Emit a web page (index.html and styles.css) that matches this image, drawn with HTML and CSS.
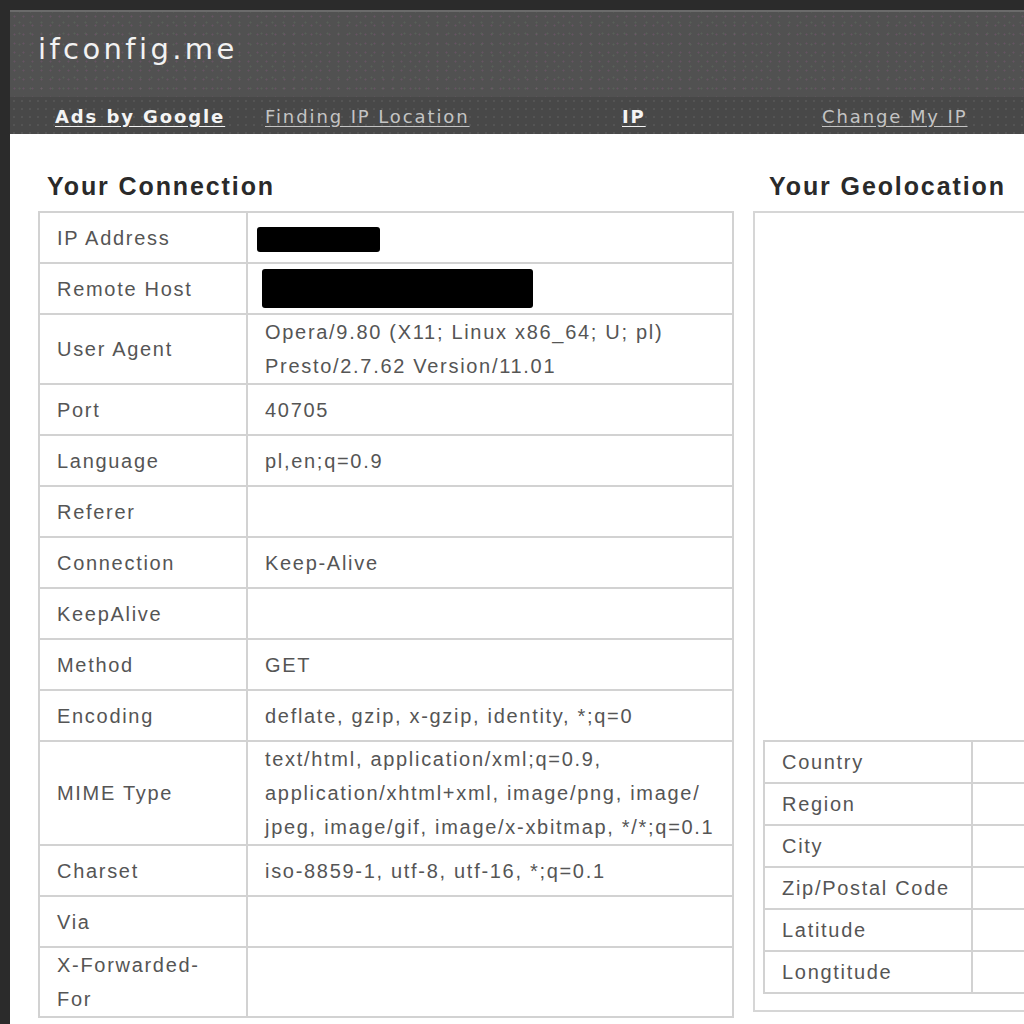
FILE: index.html
```html
<!DOCTYPE html>
<html lang="en">
<head>
  <meta charset="UTF-8" />
  <title>ifconfig.me</title>
  <link rel="stylesheet" href="styles.css">
</head>
<body>
  <div class="page">
    <div class="header">
      <div class="logo">ifconfig.me</div>
    </div>
    <div class="nav">
      <a class="nav-link strong" href="#">Ads by Google</a>
      <a class="nav-link" href="#">Finding IP Location</a>
      <a class="nav-link strong" href="#">IP</a>
      <a class="nav-link" href="#">Change My IP</a>
    </div>

    <div class="content">
      <div class="col">
        <h2 class="title">Your Connection</h2>
        <table class="info">
          <tr><td class="key">IP Address</td><td class="val"><span class="mask mask-ip"></span></td></tr>
          <tr><td class="key">Remote Host</td><td class="val"><span class="mask mask-host"></span></td></tr>
          <tr><td class="key">User Agent</td><td class="val">Opera/9.80 (X11; Linux x86_64; U; pl)<br>Presto/2.7.62 Version/11.01</td></tr>
          <tr><td class="key">Port</td><td class="val">40705</td></tr>
          <tr><td class="key">Language</td><td class="val">pl,en;q=0.9</td></tr>
          <tr><td class="key">Referer</td><td class="val"></td></tr>
          <tr><td class="key">Connection</td><td class="val">Keep-Alive</td></tr>
          <tr><td class="key">KeepAlive</td><td class="val"></td></tr>
          <tr><td class="key">Method</td><td class="val">GET</td></tr>
          <tr><td class="key">Encoding</td><td class="val">deflate, gzip, x-gzip, identity, *;q=0</td></tr>
          <tr><td class="key">MIME Type</td><td class="val">text/html, application/xml;q=0.9,<br>application/xhtml+xml, image/png, image/<br>jpeg, image/gif, image/x-xbitmap, */*;q=0.1</td></tr>
          <tr><td class="key">Charset</td><td class="val">iso-8859-1, utf-8, utf-16, *;q=0.1</td></tr>
          <tr><td class="key">Via</td><td class="val"></td></tr>
          <tr><td class="key">X-Forwarded-For</td><td class="val"></td></tr>
        </table>
      </div>

      <div class="col">
        <h2 class="title title-geo">Your Geolocation</h2>
        <div class="geo-box">
          <div class="map"></div>
          <table class="info geo">
            <tr><td class="key">Country</td><td class="val"></td></tr>
            <tr><td class="key">Region</td><td class="val"></td></tr>
            <tr><td class="key">City</td><td class="val"></td></tr>
            <tr><td class="key">Zip/Postal Code</td><td class="val"></td></tr>
            <tr><td class="key">Latitude</td><td class="val"></td></tr>
            <tr><td class="key">Longtitude</td><td class="val"></td></tr>
          </table>
        </div>
      </div>
    </div>
  </div>
</body>
</html>
```

FILE: styles.css
```css
html, body {
  margin: 0;
  padding: 0;
  background: #2b2b2b;
  overflow: hidden;
  height: 100vh;
  font-family: "Liberation Sans", Arial, sans-serif;
}

.page {
  margin: 10px 0 0 10px;
  width: 1460px;
  background: #fff;
  min-height: 1100px;
}

/* top bar with the grainy dark texture */
.header {
  height: 85px;
  border-top: 2px solid #6b6b6b;
  background-color: #515151;
  background-image:
    radial-gradient(circle, rgba(150,90,140,0.3) 0.8px, transparent 1.2px),
    radial-gradient(circle, rgba(110,140,110,0.25) 0.8px, transparent 1.2px);
  background-size: 9px 9px, 11px 11px;
  background-position: 0 0, 4px 5px;
  display: flex;
  align-items: center;
  padding-left: 28px;
}

.logo {
  font-family: "DejaVu Sans", Verdana, sans-serif;
  font-size: 29px;
  letter-spacing: 3.4px;
  color: #f2f2f2;
  margin-top: -12px;
}

.nav {
  height: 37px;
  background-color: #484848;
  background-image: radial-gradient(circle, rgba(120,120,120,0.25) 0.8px, transparent 1.2px);
  background-size: 8px 8px;
  display: grid;
  grid-template-columns: 210px 357px 200px auto;
  align-items: center;
  padding-left: 45px;
}

.nav-link {
  justify-self: start;
  font-family: "DejaVu Sans", Verdana, sans-serif;
  font-size: 18px;
  letter-spacing: 1.9px;
  color: #c4c4c4;
  text-decoration: underline;
  text-underline-offset: 3px;
  margin-top: 1px;
}

.nav-link.strong {
  color: #f4f4f4;
  font-weight: bold;
}

.content {
  display: flex;
  gap: 19px;
  padding: 37px 0 0 28px;
}

.col {
  width: 696px;
}

.title {
  margin: 0 0 10px 9px;
  font-size: 25px;
  line-height: 30px;
  font-weight: bold;
  letter-spacing: 1.9px;
  color: #2a2a2a;
}

.title-geo {
  margin-left: 16px;
}

.info {
  width: 100%;
  table-layout: fixed;
  border-collapse: collapse;
  border: 2px solid #d6d6d6;
}

.info td {
  border: 2px solid #d2d2d2;
  height: 49px;
  padding: 0 17px;
  font-size: 20px;
  line-height: 34px;
  letter-spacing: 1.7px;
  color: #555;
  vertical-align: middle;
}

.info .key {
  width: 172px;
}

.info .val {
  white-space: nowrap;
}

.mask {
  display: inline-block;
  vertical-align: middle;
  background: #000;
  border-radius: 3px;
}

.mask-ip {
  width: 123px;
  height: 25px;
  margin-left: -8px;
}

.mask-host {
  width: 271px;
  height: 39px;
  margin-left: -3px;
}

.geo-box {
  border: 2px solid #d6d6d6;
  height: 797px;
  display: flex;
  flex-direction: column;
  padding: 0 8px;
}

.map {
  flex: 1;
}

.info.geo {
  margin-bottom: 16px;
}

.info.geo td {
  height: 40px;
  line-height: 40px;
}
```
